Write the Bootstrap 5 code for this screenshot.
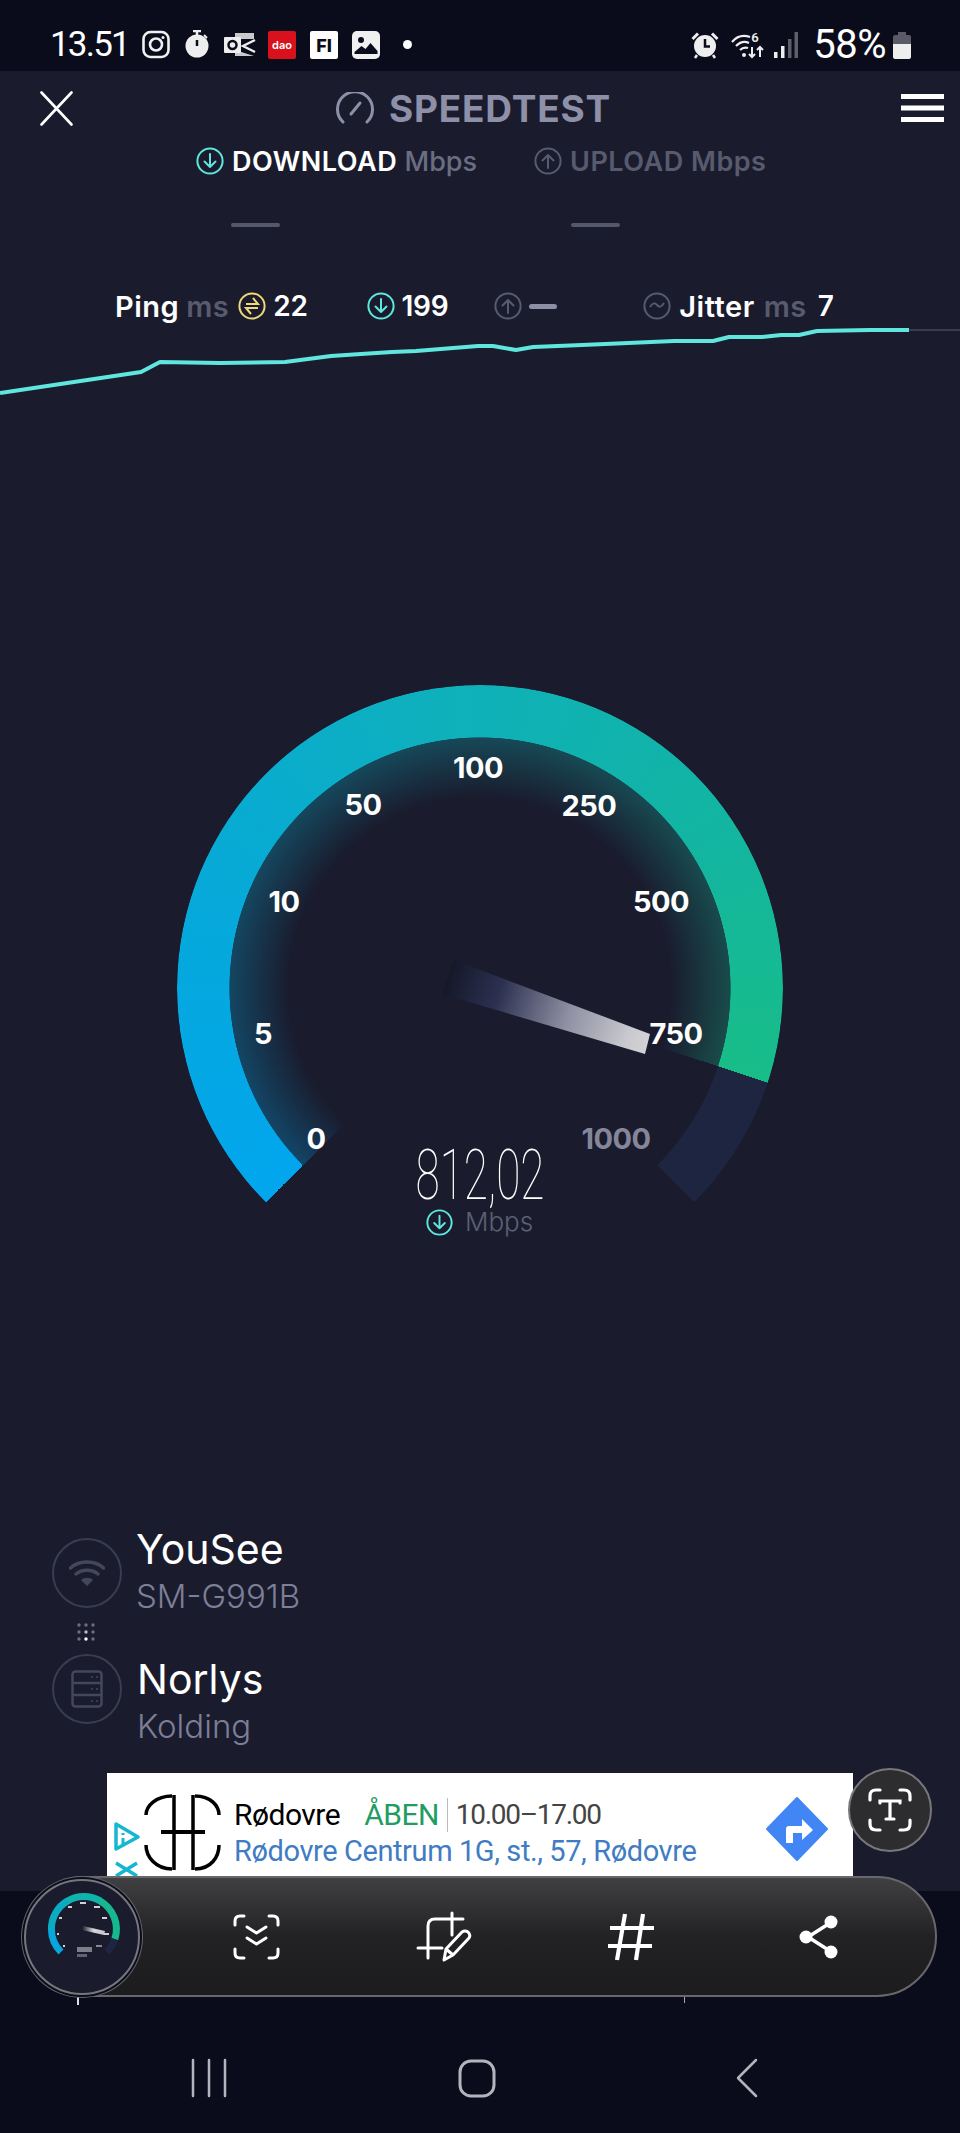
<!doctype html>
<html lang="da">
<head>
<meta charset="utf-8">
<title>Speedtest</title>
<link href="https://cdn.jsdelivr.net/npm/bootstrap@5.3.0/dist/css/bootstrap.min.css" rel="stylesheet">
<style>
html,body{margin:0;background:#0a0c1c}
body{font-family:Inter,"Liberation Sans",sans-serif;width:960px;height:2133px;position:relative;overflow:hidden;color:#fff}
.sbar{height:71px;background:#0a0c1c;padding:18px 49px 0 50px}
.clock{font:400 35px/1 Roboto,sans-serif;letter-spacing:-1.8px;width:92px}
.pct{font:400 40px/1 Roboto,sans-serif;letter-spacing:-.5px;margin:0 7px 0 15px}
.sg10{width:10px}.sg12{width:12px}.sg14{width:14px}.sg15{width:15px}.sg23{width:23px}
.sdot{width:9px;height:9px}
.app{height:1820px;background:#1a1c2e;position:relative}
.hdr{height:74px;padding:0 16px 0 40px}
.brandwrap{margin-left:263px;gap:15px}
.brand{font-weight:700;font-size:37px;line-height:1;color:#8e90a8;letter-spacing:.8px}
.tabs{height:30px;padding-left:196px;margin-top:1px}
.tabtxt{font-size:27px;line-height:1;font-weight:600;letter-spacing:.5px;margin-left:8px}
.dim{color:#6b6d82;font-weight:500;letter-spacing:0}
.dim2{color:#585a6e}
.tabgap{width:57px}
.dashes{padding:47px 0 0 231px;height:51px}
.dash{width:49px;height:4px;background:#55576a;border-radius:2px;margin-right:291px}
.stats{height:32px;margin-top:63px;padding-left:115px;font-size:28px;font-weight:600;line-height:1;letter-spacing:-.3px}
.lbl{font-size:29px;letter-spacing:.5px}
.stats .m1{margin-left:7px;margin-right:9px}
.stats .m2{margin-left:7px}
.stats .m3{margin-left:59px}
.stats .m4{margin-left:46px}
.stats .m5{margin-left:7px}
.stats .m6{margin-left:86px}
.stats .m7{margin-left:8px}
.stats .m8{margin-left:9px;margin-right:11px}
.msdash{width:28px;height:5px;border-radius:3px;background:#8d8fa5}
.trend{height:77px;width:960px;display:block;margin-top:1px}
.stage{height:600px;margin-top:260px;width:960px;position:relative}
.arc,.glow{position:absolute;border-radius:50%}
.arc{left:177px;top:25px;width:606px;height:606px;
 background:conic-gradient(from 225deg,#02a6ee 0deg,#06a9da 60deg,#0eb0bd 125deg,#12b4a4 185deg,#18bd88 243.2deg,#1e2541 243.2deg,#1e2541 270deg,transparent 270deg);
 -webkit-mask:radial-gradient(circle closest-side,transparent 82.6%,#000 82.8%);mask:radial-gradient(circle closest-side,transparent 82.6%,#000 82.8%)}
.glow{left:229px;top:77px;width:502px;height:502px;opacity:.3;
 background:conic-gradient(from 225deg,#02a6ee 0deg,#0eb0bd 125deg,#18bd88 243.2deg,transparent 243.2deg);
 -webkit-mask:radial-gradient(circle closest-side,transparent 76%,#000 100%);mask:radial-gradient(circle closest-side,transparent 76%,#000 100%)}
.needle{position:absolute;left:0;top:0;width:960px;height:600px}
.tick{position:absolute;transform:translate(-50%,-50%);font-size:29px;font-weight:700;line-height:1;letter-spacing:-.5px;color:#fff}
.t0{left:316px;top:478px}.t5{left:263px;top:373px}.t10{left:284px;top:241px}.t50{left:363px;top:144px}.t100{left:478px;top:107px}
.t250{left:589px;top:145px}.t500{left:661px;top:241px}.t750{left:676px;top:373px}.t1000{left:616px;top:478px;color:#85869a}
.speed{position:absolute;left:480px;top:485px;font:100 70px/.88 Roboto,sans-serif;transform:translateX(-50%) scaleX(.63);white-space:nowrap}
.unit{position:absolute;left:426px;top:548px;font-size:26px;line-height:28px;font-weight:300;color:#5d5f72}
.unit svg{margin-right:12px}
.isp{margin-top:277px;padding-left:52px}
.ring{width:70px;height:70px;border:2px solid #3a3c50;flex:none;margin-right:14px}
.ispname{font-size:41px;line-height:40px;font-weight:400}
.ispsub{font-size:33px;line-height:34px;font-weight:300;color:#7d7f98;margin-top:9.500px}
.isprow{height:72px}
.hi{transform:translateY(-2px)}
.low{transform:translate(1px,12px)}
.dots{height:44px;width:70px}
.ad{position:absolute;left:107px;top:1773px;width:746px;height:103px;background:#fff;overflow:hidden}
.adl1{font:400 30px/34px Roboto,sans-serif;color:#000;height:34px;letter-spacing:-.5px}
.adl2{font:400 29px/34px Roboto,sans-serif;color:#3f7cc4;letter-spacing:-.4px;margin-top:2px}
.aden{color:#1f9d63;margin-left:24px}
.adsep{width:1px;height:34px;background:#bbb;margin:0 8px}
.adtm{color:#444;font-size:28px;letter-spacing:-1.3px}
.adtxt{padding-top:25px;width:532px}
.tbtn{position:absolute;left:848px;top:1768px;width:84px;height:84px;background:#2d2d30;border:2px solid #77777b}
.tools{position:absolute;left:24px;top:1876px;width:913px;height:121px;border:2px solid #68686c;border-radius:61px;background:linear-gradient(#404042,#222224 50%,#1c1c1e)}
.thumb{position:absolute;left:-2px;top:1px;width:116px;height:116px;background:#1a1c2e;border:2px solid #77777b;box-shadow:0 0 0 2px #0a0c1c,0 0 0 3px #66666a}
.ti1{margin-left:207px}.ti2{margin-left:136px}.ti3{margin-left:136px}.ti4{margin-left:145px}
.nav-bar{height:242px;position:relative}
.remn{position:absolute;background:#aaa;width:1px;height:6px;top:1997px}
.remn-a{left:77px;background:#ddd;height:8px;width:2px}
.remn-b{left:684px}
</style>
</head>
<body>
<svg width="0" height="0" class="position-absolute">
<symbol id="dn" viewBox="0 0 28 28"><circle cx="14" cy="14" r="12.600" fill="none" stroke="currentColor" stroke-width="2"/><path d="M14 7v13M8.500 14.500 14 20l5.500-5.500" fill="none" stroke="currentColor" stroke-width="2" stroke-linecap="round" stroke-linejoin="round"/></symbol>
<symbol id="up" viewBox="0 0 28 28"><circle cx="14" cy="14" r="12.600" fill="none" stroke="currentColor" stroke-width="2"/><path d="M14 21V8M8.500 13.500 14 8l5.500 5.500" fill="none" stroke="currentColor" stroke-width="2" stroke-linecap="round" stroke-linejoin="round"/></symbol>
</svg>

<div class="sbar d-flex align-items-center">
  <span class="clock">13.51</span>
  <svg width="28" height="29" viewBox="0 0 28 29"><rect x="1.500" y="2" width="25" height="25" rx="7" fill="none" stroke="#f0f0f0" stroke-width="2.600"/><circle cx="14" cy="14.500" r="6" fill="none" stroke="#f0f0f0" stroke-width="2.600"/><circle cx="21" cy="7.500" r="1.500" fill="#f0f0f0"/></svg>
  <span class="sg15"></span>
  <svg width="24" height="29" viewBox="0 0 24 29"><path d="M8 1h8M12 1v4" stroke="#eee" stroke-width="2.500"/><path d="M19 5l3 3" stroke="#eee" stroke-width="2"/><circle cx="12" cy="16" r="11.500" fill="#eee"/><path d="M12 10v6" stroke="#0a0c1c" stroke-width="2.500"/></svg>
  <span class="sg14"></span>
  <svg width="33" height="25" viewBox="0 0 33 25"><path d="M12 1h19v6H12zM12 18l19 6H12z" fill="#c9c9cc"/><path d="M32 8 20 14l12 6" fill="none" stroke="#eee" stroke-width="2.400"/><rect x="1" y="5" width="17" height="16" rx="1" fill="#eee"/><circle cx="9.500" cy="13" r="4" fill="none" stroke="#0a0c1c" stroke-width="2.500"/></svg>
  <span class="sg12"></span>
  <svg width="28" height="28" viewBox="0 0 28 28"><rect width="28" height="28" rx="2" fill="#d8111c"/><text x="14" y="18" text-anchor="middle" font-family="Inter,sans-serif" font-size="11" font-weight="600" fill="#fff">dao</text></svg>
  <span class="sg14"></span>
  <svg width="28" height="28" viewBox="0 0 28 28"><rect width="28" height="28" rx="2" fill="#fff"/><text x="14" y="21" text-anchor="middle" font-family="Inter,sans-serif" font-size="18" font-weight="800" fill="#0a0c1c">FI</text></svg>
  <span class="sg14"></span>
  <svg width="28" height="28" viewBox="0 0 28 28"><rect width="28" height="28" rx="5" fill="#f0f0f0"/><circle cx="9" cy="9" r="3" fill="#0a0c1c"/><path d="M2.500 21l7-6 4 3 5-6 7 8v3h-23z" fill="#0a0c1c"/></svg>
  <span class="sg23"></span>
  <span class="rounded-circle bg-white sdot"></span>
  <span class="flex-grow-1"></span>
  <svg width="28" height="28" viewBox="0 0 28 28"><circle cx="14" cy="15" r="11" fill="#eee"/><path d="M14 8v7.500h5" fill="none" stroke="#0a0c1c" stroke-width="2.500"/><path d="M1.500 8 7 2.500M26.500 8 21 2.500" stroke="#eee" stroke-width="3"/><path d="M6 24l-2 3M22 24l2 3" stroke="#eee" stroke-width="2.500"/></svg>
  <span class="sg12"></span>
  <svg width="33" height="28" viewBox="0 0 33 28"><g fill="none" stroke="#eee" stroke-width="2.200"><path d="M1 11C6 5 13 4 19 6"/><path d="M5 15c4-4 9-5 13-3"/><path d="M9 19c2-2 5-3 8-2"/></g><circle cx="13" cy="24" r="2" fill="#eee"/><text x="24" y="11" text-anchor="middle" font-family="Roboto,sans-serif" font-size="13" font-weight="600" fill="#eee">6</text><path d="M21 16v10M18 23l3 3 3-3M29 26V16M26 19l3-3 3 3" fill="none" stroke="#eee" stroke-width="2"/></svg>
  <span class="sg10"></span>
  <svg width="24" height="28" viewBox="0 0 24 28"><rect x="0" y="21" width="3.500" height="6" fill="#eee"/><rect x="7" y="15" width="3.500" height="12" fill="#eee"/><rect x="14" y="8" width="3.500" height="19" fill="#5e5f6a"/><rect x="20.500" y="1" width="3.500" height="26" fill="#5e5f6a"/></svg>
  <span class="pct">58%</span>
  <svg width="18" height="28" viewBox="0 0 18 28"><path d="M5 1h8v3h3a2 2 0 0 1 2 2v7H0V6a2 2 0 0 1 2-2h3z" fill="#5a5b66"/><path d="M0 13h18v13a2 2 0 0 1-2 2H2a2 2 0 0 1-2-2z" fill="#eee"/></svg>
</div>

<div class="app">
  <div class="hdr d-flex align-items-center">
    <svg width="33" height="35" viewBox="0 0 33 35"><path d="M1.500 1.500 31.500 33.500M31.500 1.500 1.500 33.500" stroke="#fff" stroke-width="2.600" stroke-linecap="round"/></svg>
    <div class="d-flex align-items-center brandwrap">
      <svg width="38" height="32" viewBox="0 0 38 32"><path d="M7 30A17.500 17.500 0 1 1 31 30" fill="none" stroke="#8e90a8" stroke-width="3" stroke-linecap="round"/><path d="M15 22 24 11" stroke="#8e90a8" stroke-width="3" stroke-linecap="round"/></svg>
      <span class="brand">SPEEDTEST</span>
    </div>
    <svg width="43" height="28" viewBox="0 0 43 28" class="ms-auto"><path d="M0 0h43v5H0zM0 11.500h43v5H0zM0 23h43v5H0z" fill="#fff"/></svg>
  </div>

  <div class="tabs d-flex align-items-center">
    <svg width="28" height="28" color="#5fe6de"><use href="#dn"/></svg>
    <span class="tabtxt">DOWNLOAD <span class="dim">Mbps</span></span>
    <span class="tabgap"></span>
    <svg width="28" height="28" color="#585a6e"><use href="#up"/></svg>
    <span class="tabtxt dim2">UPLOAD Mbps</span>
  </div>

  <div class="dashes d-flex"><span class="dash"></span><span class="dash"></span></div>

  <div class="stats d-flex align-items-center">
    <span class="lbl">Ping</span><span class="dim2 m1 lbl">ms</span>
    <svg width="28" height="28" viewBox="0 0 28 28"><circle cx="14" cy="14" r="12.600" fill="none" stroke="#f0d878" stroke-width="2"/><path d="M8 12h12l-5-6M20 16H8l5 6" fill="none" stroke="#f0d878" stroke-width="2"/></svg>
    <span class="m2">22</span>
    <svg width="28" height="28" class="m3" color="#5fe6de"><use href="#dn"/></svg>
    <span class="m5">199</span>
    <svg width="28" height="28" class="m4" color="#585a6e"><use href="#up"/></svg>
    <span class="msdash m5"></span>
    <svg width="28" height="28" viewBox="0 0 28 28" class="m6"><circle cx="14" cy="14" r="12.600" fill="none" stroke="#585a6e" stroke-width="2"/><path d="M7 15c3-5 5-4 7-2s4 3 7-2" fill="none" stroke="#585a6e" stroke-width="2"/></svg>
    <span class="m7 lbl">Jitter</span><span class="dim2 m8 lbl">ms</span><span>7</span>
  </div>

  <svg class="trend" viewBox="0 0 960 77" width="960" height="77">
    <path d="M909 7H960" stroke="#44465a" stroke-width="1.500"/>
    <path d="M0 70 141 49 160 39 220 40 285 39 331 33 361 31 392 29 416 28 478 23 493 23 516 27 533 24 582 22 674 18 713 18 729 14 762 14 781 12 799 12 817 8 870 7 909 7" fill="none" stroke="#5fe6de" stroke-width="4" stroke-linejoin="round"/>
  </svg>

  <div class="stage">
    <div class="glow"></div>
    <div class="arc"></div>
    <svg class="needle" viewBox="0 0 960 600">
      <defs><linearGradient id="ng" gradientUnits="userSpaceOnUse" x1="448" y1="317" x2="648" y2="384"><stop offset="0" stop-color="#151829"/><stop offset=".25" stop-color="#2b3050"/><stop offset=".6" stop-color="#8f90a2"/><stop offset=".9" stop-color="#c9c9cf"/><stop offset="1" stop-color="#d2d2d6"/></linearGradient></defs>
      <path d="M454 300 650 374 645 394 442 334Z" fill="url(#ng)"/>
    </svg>
    <span class="tick t0">0</span><span class="tick t5">5</span><span class="tick t10">10</span><span class="tick t50">50</span><span class="tick t100">100</span><span class="tick t250">250</span><span class="tick t500">500</span><span class="tick t750">750</span><span class="tick t1000">1000</span>
    <div class="speed">812,02</div>
    <div class="unit d-flex align-items-center"><svg width="27" height="27" color="#5fe6de"><use href="#dn"/></svg>Mbps</div>
  </div>

  <div class="isp">
    <div class="isprow d-flex align-items-center">
      <div class="ring rounded-circle d-flex align-items-center justify-content-center">
        <svg width="36" height="28" viewBox="0 0 36 28"><path d="M1.500 9C10 1 26 1 34.500 9M7 15c6-5 16-5 22 0" fill="none" stroke="#44465a" stroke-width="3.500" stroke-linecap="round"/><path d="M12 21c3-3 9-3 12 0l-6 6z" fill="#44465a"/></svg>
      </div>
      <div class="hi"><div class="ispname">YouSee</div><div class="ispsub">SM-G991B</div></div>
    </div>
    <svg class="dots d-block" viewBox="0 0 70 44"><g fill="#6c6e80"><circle cx="27" cy="16" r="1.700"/><circle cx="34" cy="16" r="1.700"/><circle cx="41" cy="16" r="1.700"/><circle cx="27" cy="23" r="1.700"/><circle cx="41" cy="23" r="1.700"/><circle cx="27" cy="30" r="1.700"/><circle cx="41" cy="30" r="1.700"/></g><circle cx="34" cy="23" r="1.700" fill="#b8b9c4"/><circle cx="34" cy="30" r="1.700" fill="#fff"/></svg>
    <div class="isprow d-flex align-items-center">
      <div class="ring rounded-circle d-flex align-items-center justify-content-center">
        <svg width="32" height="38" viewBox="0 0 32 38"><rect x="1.500" y="1.500" width="29" height="35" rx="3" fill="none" stroke="#44465a" stroke-width="2.500"/><path d="M1.500 13h29M1.500 25h29" stroke="#44465a" stroke-width="2.500"/><path d="M20 7h2M25 7h2M20 19h2M25 19h2M20 31h2M25 31h2" stroke="#44465a" stroke-width="1.500"/></svg>
      </div>
      <div class="low"><div class="ispname">Norlys</div><div class="ispsub">Kolding</div></div>
    </div>
  </div>
</div>

<div class="nav-bar d-flex align-items-start">
  <svg width="960" height="242" viewBox="0 0 960 242">
    <path d="M193 169v36M209 169v36M225 169v36" stroke="#b4b4bc" stroke-width="2.500" stroke-linecap="round"/>
    <rect x="460" y="170" width="34" height="35" rx="11" fill="none" stroke="#b4b4bc" stroke-width="3"/>
    <path d="M756 169 738 187 756 205" fill="none" stroke="#b4b4bc" stroke-width="2.500" stroke-linecap="round" stroke-linejoin="round"/>
  </svg>
</div>

<div class="ad d-flex">
  <svg width="37" height="103" viewBox="0 0 37 103" class="flex-shrink-0"><path d="M9 51 31 64 9 76Z" fill="none" stroke="#15b7d0" stroke-width="3.500" stroke-linejoin="round"/><path d="M16 60v2M16 65v7" stroke="#15b7d0" stroke-width="3"/><path d="M9 90 30 103M30 90 9 103" stroke="#15b7d0" stroke-width="3.500"/></svg>
  <svg width="90" height="103" viewBox="0 0 90 103" class="flex-shrink-0"><g fill="none" stroke="#000" stroke-width="3.500"><path d="M28 23C12 23 2 33 2 42M2 72C2 84 12 96 28 96"/><path d="M30 22v75M49 22v75"/><path d="M51 23C67 23 75 33 75 42M75 72C75 84 67 96 51 96"/><path d="M17 59h44" stroke-width="4"/></g></svg>
  <div class="adtxt">
    <div class="adl1 d-flex align-items-center"><span>Rødovre</span><span class="aden">ÅBEN</span><span class="adsep"></span><span class="adtm">10.00–17.00</span></div>
    <div class="adl2">Rødovre Centrum 1G, st., 57, Rødovre</div>
  </div>
  <svg width="62" height="64" viewBox="0 0 62 64" class="flex-shrink-0 mt-4"><path d="M31 1 61 32 31 63 1 32Z" fill="#4285f4" stroke="#4285f4" stroke-width="2" stroke-linejoin="round"/><path d="M20 46V32q0-3 3-3h13v-7l11 11-11 10v-7H27v10z" fill="#fff"/></svg>
</div>

<div class="tbtn rounded-circle d-flex align-items-center justify-content-center">
  <svg width="44" height="44" viewBox="0 0 44 44"><path d="M2 12V8q0-6 6-6h4M32 2h4q6 0 6 6v4M2 32v4q0 6 6 6h4M42 32v4q0 6-6 6h-4" fill="none" stroke="#fff" stroke-width="3.200" stroke-linecap="round"/><path d="M12 15v-2h20v2M22 13v18M18 31h8" fill="none" stroke="#fff" stroke-width="3.200" stroke-linecap="round"/></svg>
</div>

<span class="remn remn-a"></span><span class="remn remn-b"></span>

<div class="tools d-flex align-items-center">
  <div class="thumb rounded-circle">
    <svg width="112" height="112" viewBox="0 0 112 112">
      <defs><linearGradient id="mn" x1="0" x2="1"><stop offset="0" stop-color="#1a1c2e"/><stop offset=".5" stop-color="#d5d5da"/><stop offset="1" stop-color="#c5c5cc"/></linearGradient></defs>
      <g fill="none" stroke-width="7.500" transform="translate(4 3.400) scale(.93)">
        <path d="M33.300 72.700A35 35 0 0 1 23 48" stroke="#08a6dc"/>
        <path d="M23 48.500A35 35 0 0 1 40.500 17.700" stroke="#0cabc4"/>
        <path d="M40 18A35 35 0 0 1 75.500 17.700" stroke="#10b2ac"/>
        <path d="M75 17.500A35 35 0 0 1 91.200 58.900" stroke="#16b98f"/>
        <path d="M91.200 58.900A35 35 0 0 1 82.700 72.700" stroke="#1e2541"/>
      </g>
      <path d="M57 45 79 50 78 54 56 49Z" fill="url(#mn)"/>
      <g fill="#d0d0d6"><rect x="54" y="21" width="6" height="2"/><rect x="42" y="25" width="4" height="2"/><rect x="68" y="25" width="6" height="2"/><rect x="33" y="36" width="3" height="2"/><rect x="76" y="36" width="5" height="2"/><rect x="31" y="52" width="2" height="2"/><rect x="78" y="52" width="5" height="2"/><rect x="37" y="64" width="2" height="2"/><rect x="70" y="64" width="6" height="2" opacity=".6"/><rect x="51" y="66" width="15" height="5" opacity=".55"/><rect x="51" y="73" width="10" height="3" opacity=".4"/></g>
    </svg>
  </div>
  <svg class="ti1" width="47" height="46" viewBox="0 0 47 46"><path d="M2 11V7q0-5 5-5h4M36 2h4q5 0 5 5v4M2 35v4q0 5 5 5h4M45 35v4q0 5-5 5h-4" fill="none" stroke="#fff" stroke-width="3" stroke-linecap="round"/><path d="M14 13l9.500 6 9.500-6M14 24l9.500 6 9.500-6" fill="none" stroke="#fff" stroke-width="3" stroke-linecap="round" stroke-linejoin="round"/></svg>
  <svg class="ti2" width="56" height="52" viewBox="0 0 56 52"><path d="M2 37h24M12 47V15q0-7 7-7h28M36 2v22" fill="none" stroke="#fff" stroke-width="3" stroke-linecap="round"/><path d="M28 49l2-11 16-17q3-2 6 0 3 3 1 6L37 44ZM30 38l7 6" fill="#212123" stroke="#fff" stroke-width="3" stroke-linejoin="round"/></svg>
  <svg class="ti3" width="46" height="48" viewBox="0 0 46 48"><path d="M17 1 9 47M35 1 28 47M2 15h44M0 33h44" fill="none" stroke="#fff" stroke-width="4.200"/></svg>
  <svg class="ti4" width="40" height="44" viewBox="0 0 40 44"><path d="M31 8 9 22l22 14" fill="none" stroke="#fff" stroke-width="3.500"/><circle cx="32" cy="7" r="6.500" fill="#fff"/><circle cx="7" cy="22" r="6.500" fill="#fff"/><circle cx="32" cy="37" r="6.500" fill="#fff"/></svg>
</div>
</body>
</html>
